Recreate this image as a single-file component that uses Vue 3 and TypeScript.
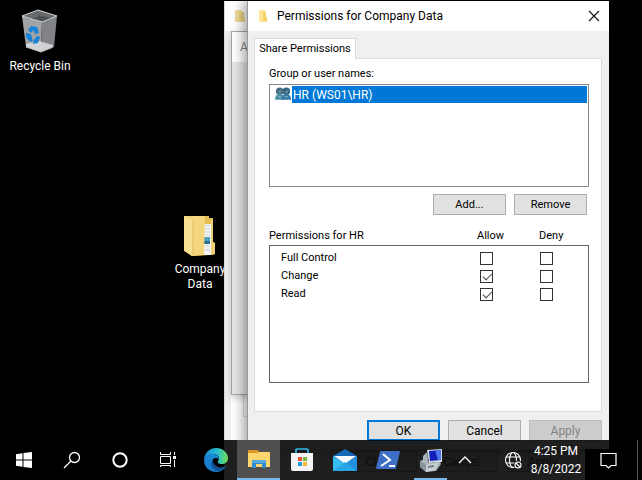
<script setup lang="ts">
import { reactive } from 'vue'

interface Permission {
  name: string
  allow: boolean
  deny: boolean
}

const permissions = reactive<Permission[]>([
  { name: 'Full Control', allow: false, deny: false },
  { name: 'Change', allow: true, deny: false },
  { name: 'Read', allow: true, deny: false },
])
</script>

<template>
  <div class="desktop">
    <a class="shortcut recycle" href="#recycle-bin">
      <svg width="48" height="48" viewBox="0 0 48 48" aria-hidden="true">
        <path d="M6 8 26 14 25 44 10 39z" fill="#a2a3a5" />
        <path d="M26 14 41 8 38 39 25 44z" fill="#818386" />
        <path d="M6 8 22 2 41 8 26 14z" fill="#4d5052" />
        <path d="M22 2v7l-10 2-6-3zM22 2l19 6-6 2-13-3z" fill="#686b6e" />
        <path d="m10 36 13-3 14 4-1 3-11 4-15-5z" fill="#dddee0" opacity=".85" />
        <path d="M6 8 22 2 41 8 26 14z" fill="none" stroke="#d0d1d3" />
        <path d="m10 39 15 5 12-5" fill="none" stroke="#b7b9bb" />
        <path d="m12 22 3-4 6 1 2 6-4 1-2-4-2 3zM10 25l5 1 1 4 1 4-4-1-3-4zM18 32l3-4 3 1-2 6-5 1z" fill="#1683d8" />
      </svg>
      <span>Recycle Bin</span>
    </a>

    <a class="shortcut company" href="#company-data">
      <svg width="48" height="48" viewBox="0 0 48 48" aria-hidden="true">
        <path d="M8 4h25v2h4v24l2 1v11l-5 1-18 1z" fill="#e5bd55" />
        <path d="M27 12h8v31h-8z" fill="#f3f5f5" />
        <path d="M29 14h5M29 17h5M29 20h5M29 23h5M29 34h5M29 38h5" stroke="#c7d1d6" />
        <path d="M28 25h6v7h-6z" fill="#4ba2ba" />
        <path d="M28 29h6v3h-6z" fill="#286f91" />
        <path d="M35 8h2v22l2 1v11l-4 1z" fill="#edcf74" />
        <path d="M8 4h21l-1 39-12 1-8-5z" fill="#f3d67d" />
        <path d="m8 4 9 5-1 35-8-6z" fill="#f8df91" />
        <path d="M17 9v34" stroke="#dfbf67" />
      </svg>
      <span>Company<br />Data</span>
    </a>

    <section class="window properties" aria-label="Properties">
      <header class="titlebar">
        <svg class="folder" width="12" height="14" viewBox="0 0 12 14" aria-hidden="true">
          <path d="M1 1h7v4l3 4v4H1z" fill="#f3dc99" /><path d="M5 3h5v9H5z" fill="#e9cf85" />
        </svg>
      </header>
      <div class="sheet"><div class="sheet-group"></div></div>
      <footer class="actions back-actions">
        <button type="button">Close</button>
        <button type="button">Cancel</button>
        <button type="button">Apply</button>
      </footer>
    </section>

    <section class="window sharing" aria-label="Advanced Sharing">
      <header class="titlebar dim">A</header>
      <div class="edge-mark"></div>
    </section>

    <section class="window dialog" role="dialog" aria-labelledby="dialog-title">
      <header class="titlebar">
        <svg class="folder" width="12" height="14" viewBox="0 0 12 14" aria-hidden="true">
          <path d="M2 1h6v5l2 3v4H2z" fill="#ffe394" /><path d="M6 3h3v4l1 2v3H6z" fill="#f5cf69" />
        </svg>
        <h1 id="dialog-title">Permissions for Company Data</h1>
        <button class="close" type="button" aria-label="Close">
          <svg width="12" height="12" viewBox="0 0 12 12"><path d="m1 1 10 10M11 1 1 11" stroke="#111" stroke-width="1.1" /></svg>
        </button>
      </header>

      <div class="content">
        <div role="tablist">
          <button class="tab" type="button" role="tab" aria-selected="true">Share Permissions</button>
        </div>
        <div class="panel" role="tabpanel">
          <div id="names-label" class="label">Group or user names:</div>
          <ul class="names" role="listbox" aria-labelledby="names-label">
            <li role="option" aria-selected="true">
              <svg width="17" height="16" viewBox="0 0 18 16" aria-hidden="true">
                <circle cx="5" cy="5" r="4" fill="#456f82" />
                <path d="M0 14q0-6 5-6t5 6z" fill="#4c91a8" />
                <circle cx="12" cy="5" r="4" fill="#34647e" />
                <path d="M7 14q0-6 5-6t5 6z" fill="#397ba8" />
                <path d="m3 10 2 2 2-2M10 10l2 2 2-2" fill="#7fb0c0" />
                <path d="M3 5q3 0 4-2v3L5 8zM10 5q3 0 4-2v3l-2 2z" fill="#5f8a9b" />
              </svg>
              <span>HR (WS01\HR)</span>
            </li>
          </ul>
          <div class="list-actions">
            <button type="button">Add...</button>
            <button type="button">Remove</button>
          </div>
          <table>
            <thead>
              <tr><th scope="col">Permissions for HR</th><th scope="col">Allow</th><th scope="col">Deny</th></tr>
            </thead>
            <tbody>
              <tr v-for="item in permissions" :key="item.name">
                <th scope="row">{{ item.name }}</th>
                <td><input v-model="item.allow" type="checkbox" :aria-label="`Allow ${item.name}`" /></td>
                <td><input v-model="item.deny" type="checkbox" :aria-label="`Deny ${item.name}`" /></td>
              </tr>
            </tbody>
          </table>
        </div>
        <footer class="actions">
          <button class="default" type="button">OK</button>
          <button type="button">Cancel</button>
          <button type="button" disabled>Apply</button>
        </footer>
      </div>
    </section>

    <nav class="taskbar" aria-label="Taskbar">
      <button class="system" type="button" aria-label="Start">
        <svg width="16" height="16" viewBox="0 0 16 16"><path d="M0 2.2 6.5 1.3v6.2H0zM7.5 1.1 16 0v7.5H7.5zM0 8.5h6.5v6.2L0 13.8zM7.5 8.5H16V16l-8.5-1.1z" fill="#fff" /></svg>
      </button>
      <button class="system" type="button" aria-label="Search">
        <svg width="18" height="18" viewBox="0 0 18 18" fill="none" stroke="#fff" stroke-width="1.3"><circle cx="11.5" cy="6.5" r="5" /><path d="m8 10-7 7" /></svg>
      </button>
      <button class="system" type="button" aria-label="Cortana">
        <svg width="18" height="18" viewBox="0 0 18 18"><circle cx="9" cy="9" r="6.7" fill="none" stroke="#fff" stroke-width="2" /></svg>
      </button>
      <button class="system" type="button" aria-label="Task View">
        <svg width="18" height="18" viewBox="0 0 18 18" fill="none" stroke="#fff"><path d="M1.5 1v2.5h10V1M1.5 5.5h10v7h-10zM1.5 16v-1.5h10V16M15.5 1v3M15.5 9v7" /><path d="M14 5h3v3h-3z" fill="#fff" stroke="none" /></svg>
      </button>
      <div class="apps">
        <button type="button" aria-label="Microsoft Edge">
          <svg width="24" height="24" viewBox="0 0 24 24">
            <defs>
              <linearGradient id="edge-top"><stop stop-color="#1688d2" /><stop offset=".55" stop-color="#27bdd2" /><stop offset="1" stop-color="#70dd52" /></linearGradient>
              <linearGradient id="edge-low" x2="0" y2="1"><stop stop-color="#1789d4" /><stop offset="1" stop-color="#1976c7" /></linearGradient>
            </defs>
            <path d="M0 11C1 4 6 0 12 0c7 0 12 5 12 10 0 4-3 6-6 6-3 0-5-1-4-3 3-4-1-7-5-7-4 0-7 2-9 5z" fill="url(#edge-top)" />
            <path d="M0 12c1-4 4-6 8-6 4 0 7 2 7 5-6-3-8 2-5 6 3 4 8 4 12 1-2 4-6 6-10 6C5 24 0 19 0 12z" fill="url(#edge-low)" />
            <path d="M9 11c-4 5 0 12 6 12 3-1 6-3 7-5-4 2-8 2-11-1-2-2-3-4-2-6z" fill="#124f91" />
          </svg>
        </button>
        <button class="active" type="button" aria-label="File Explorer">
          <svg width="22" height="20" viewBox="0 0 22 20"><path d="M0 2q0-1 1-1h8l2 2h10q1 0 1 1v14H0z" fill="#ffd66d" /><path d="M0 2q0-1 1-1h8l2 2-2 1H0z" fill="#d99a24" /><path d="M4 19v-7q0-1 1-1h12q1 0 1 1v7h-4v-4H8v4z" fill="#318bd0" /><path d="M4 12q0-1 1-1h12q1 0 1 1v2H4z" fill="#55a9df" /></svg>
        </button>
        <button type="button" aria-label="Microsoft Store">
          <svg width="24" height="24" viewBox="0 0 24 24"><path d="M6 6V2q0-1 1-1h10q1 0 1 1v4" fill="none" stroke="#30b8e8" stroke-width="1.7" /><path d="M1 5h22v16q0 2-2 2H3q-2 0-2-2z" fill="#f4f4f5" /><path d="M8 9h4v4H8z" fill="#e95131" /><path d="M13 9h4v4h-4z" fill="#7bb437" /><path d="M8 14h4v4H8z" fill="#219ed8" /><path d="M13 14h4v4h-4z" fill="#f4b72d" /></svg>
        </button>
        <button type="button" aria-label="Mail">
          <svg width="24" height="24" viewBox="0 0 24 24"><path d="M0 8 12 1l12 7v15H0z" fill="#1769b8" /><path d="M1 8h22l-11 8z" fill="#f7fbff" /><path d="m0 8 12 8L0 23z" fill="#36bef0" /><path d="m24 8-12 8 12 7z" fill="#238fdd" /><path d="m0 23 12-9 12 9z" fill="#29a6e8" /></svg>
        </button>
        <button type="button" aria-label="PowerShell">
          <svg width="24" height="20" viewBox="0 0 24 20"><path d="M5 1h18q1 0 1 1l-4 16q0 1-1 1H1q-1 0-1-1L4 2q0-1 1-1z" fill="#3e6fc6" /><path d="m7 4 7 6-9 6M13 16h6" fill="none" stroke="#fff" stroke-width="2" /></svg>
        </button>
        <button class="running" type="button" aria-label="Computer Management">
          <svg width="24" height="24" viewBox="0 0 24 24"><path d="m8 2 15-1v13l-13 1z" fill="#d5dde2" /><path d="m10 3 12-1v10l-11 1z" fill="#1020b8" /><path d="m16 2 6 0v10l-3 0z" fill="#4f75ed" /><path d="m1 13 7-3 2 5 11-1 1 2-5 7-10 1-6-5z" fill="#a9b5bb" /><path d="m1 13 6 4v7l-6-5z" fill="#87949a" /><path d="m7 17 13-3-4 8-9 2z" fill="#c8d0d3" /><path d="m9 18 6-1v2l-6 1z" fill="#6f7f82" /><path d="m4 8 4-4 1 7-5 3z" fill="#aab5bb" /></svg>
        </button>
      </div>
      <div class="tray">
        <button class="chevron" type="button" aria-label="Show hidden icons"><svg width="14" height="8" viewBox="0 0 14 8"><path d="m1 7 6-6 6 6" fill="none" stroke="#fff" stroke-width="1.4" /></svg></button>
        <button class="network" type="button" aria-label="Network">
          <svg width="18" height="18" viewBox="0 0 18 18" fill="none" stroke="#fff" stroke-width="1.1"><circle cx="9" cy="9" r="7.5" /><ellipse cx="9" cy="9" rx="3.5" ry="7.5" /><path d="M2 6h14M2 12h14" /><circle cx="14" cy="14" r="4.5" fill="#1d1d1d" stroke="none" /><circle cx="14" cy="14" r="3" /><path d="m12 12 4 4" /></svg>
        </button>
        <button class="clock" type="button"><time datetime="2022-08-08T16:25">4:25 PM<br />8/8/2022</time></button>
        <button class="notifications" type="button" aria-label="Notifications"><svg width="17" height="17" viewBox="0 0 17 17"><path d="M1 1.5h15v12h-5L8.5 16 6 13.5H1z" fill="none" stroke="#fff" stroke-width="1.2" /></svg></button>
      </div>
    </nav>
  </div>
</template>

<style>
body {
  margin: 0;
  background: #000;
}
</style>

<style scoped>
* {
  box-sizing: border-box;
}
.desktop {
  position: relative;
  min-height: 100vh;
  overflow: hidden;
  background: #000;
  color: #000;
  font: 12px/16px Roboto, "Open Sans", sans-serif;
}
button {
  padding: 0;
  border: 0;
  background: none;
  color: inherit;
  font: inherit;
}
svg {
  display: block;
  flex: none;
}
.shortcut {
  position: absolute;
  display: flex;
  flex-direction: column;
  align-items: center;
  width: 76px;
  color: #fff;
  text-align: center;
  text-decoration: none;
}
.recycle {
  left: 2px;
  top: 8px;
  gap: 2px;
}
.company {
  left: 162px;
  top: 212px;
  gap: 2px;
  line-height: 15px;
}
.window {
  position: absolute;
  background: #f0f0f0;
}
.titlebar {
  display: flex;
  align-items: center;
  height: 30px;
  padding-left: 9px;
  background: #fff;
}
.properties {
  left: 224px;
  top: 1px;
  width: 361px;
  height: 479px;
  border-left: 1px solid #d8d8d8;
}
.sheet {
  height: 412px;
  margin: 0 6px;
  padding: 0 12px;
  background: #fff;
}
.sheet-group {
  height: 386px;
  border: 1px solid #dcdcdc;
  border-top: 0;
}
.sharing {
  left: 231px;
  top: 31px;
  width: 360px;
  height: 364px;
  border: 1px solid #a5a5a5;
  background: #e6e6e6;
  box-shadow: 0 3px 8px #0003;
}
.dim {
  padding-left: 8px;
  color: #888;
}
.edge-mark {
  width: 16px;
  height: 13px;
  margin-top: 16px;
  border-right: 1px solid #333;
}
.dialog {
  left: 248px;
  top: 1px;
  width: 361px;
  box-shadow: -1px 0 #999, -4px 0 12px #0006;
}
.dialog .titlebar {
  gap: 8px;
}
h1 {
  flex: 1;
  margin: 0;
  font-size: 12px;
  font-weight: 400;
  line-height: 16px;
}
.close {
  display: grid;
  place-items: center;
  width: 30px;
  height: 30px;
}
.content {
  padding: 7px 7px 8px 6px;
}
.tab {
  position: relative;
  display: block;
  width: 102px;
  height: 21px;
  margin-bottom: -1px;
  border: 1px solid #dcdcdc;
  border-bottom: 0;
  background: #fff;
  font-size: 11px;
}
.panel {
  height: 354px;
  padding: 7px 12px 0 14px;
  border: 1px solid #dcdcdc;
  background: #fff;
  font-size: 11px;
}
.label {
  height: 18px;
}
.names {
  height: 103px;
  margin: 0;
  padding: 1px;
  border: 1px solid #828790;
  list-style: none;
}
.names li {
  display: flex;
  height: 17px;
  padding-left: 4px;
  color: #fff;
}
.names span {
  flex: 1;
  padding-left: 1px;
  background: #0078d7;
  font-size: 12px;
  line-height: 18px;
}
.list-actions,
.actions {
  display: flex;
  justify-content: flex-end;
  gap: 8px;
}
.list-actions {
  padding: 7px 2px 0 0;
}
.list-actions button,
.actions button {
  width: 73px;
  height: 21px;
  border: 1px solid #adadad;
  background: #e1e1e1;
}
.actions {
  padding-top: 8px;
}
.actions .default {
  border: 2px solid #0078d7;
}
.actions button:disabled {
  border-color: #bfbfbf;
  background: #ccc;
  color: #838383;
}
.back-actions {
  padding-right: 6px;
}
.back-actions button {
  color: #555;
}
table,
thead,
tbody {
  display: block;
}
table {
  padding-top: 12px;
}
tr {
  display: grid;
  align-items: center;
  height: 18px;
}
th,
td {
  padding: 0;
  font-weight: 400;
  text-align: left;
}
thead tr {
  grid-template-columns: 1fr 62px 50px;
}
tbody {
  height: 138px;
  padding: 3px 0 0 11px;
  border: 1px solid #646464;
}
tbody tr {
  grid-template-columns: 1fr 60px 48px;
}
input {
  appearance: none;
  display: block;
  position: relative;
  width: 13px;
  height: 13px;
  margin: 0;
  border: 1px solid #333;
  background: #fff;
}
input:checked::after {
  position: absolute;
  top: 0;
  left: 4px;
  width: 4px;
  height: 8px;
  border: solid #444;
  border-width: 0 1px 1px 0;
  content: "";
  transform: rotate(45deg);
}
.taskbar {
  position: absolute;
  right: 0;
  bottom: 0;
  left: 0;
  display: flex;
  height: 40px;
  background: rgb(0 0 0 / 87%);
  color: #fff;
}
.taskbar button {
  display: grid;
  place-items: center;
  height: 40px;
}
.system {
  width: 48px;
}
.apps {
  display: flex;
  padding-left: 2px;
}
.apps button {
  width: 43px;
}
.apps .active {
  border-bottom: 2px solid #76b9ed;
  background: #505050;
}
.apps .running {
  background: linear-gradient(#76b9ed, #76b9ed) center bottom / 33px 2px no-repeat;
}
.tray {
  display: flex;
  flex: 1;
  justify-content: flex-end;
  padding-right: 4px;
  border-right: 1px solid #555;
  margin-right: 4px;
}
.tray .chevron {
  width: 26px;
  margin-right: auto;
}
.tray .network {
  width: 32px;
}
.tray .clock {
  width: 54px;
  line-height: 18px;
}
.tray .notifications {
  width: 50px;
}
</style>
